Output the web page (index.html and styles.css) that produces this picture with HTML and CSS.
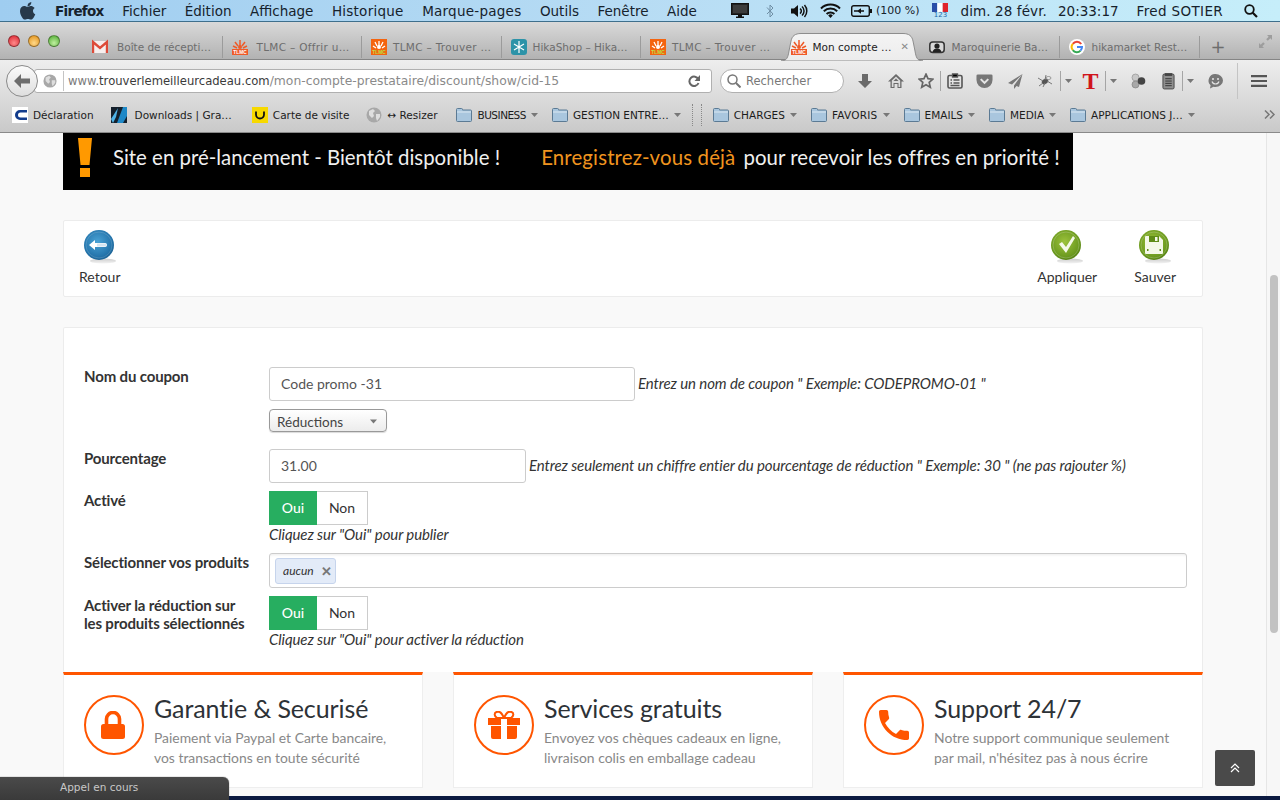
FILE: index.html
```html
<!DOCTYPE html>
<html lang="fr">
<head>
<meta charset="utf-8">
<title>Mon compte prestataire</title>
<link rel="stylesheet" href="styles.css">
</head>
<body>
<svg class="defs" aria-hidden="true">
  <defs>
    <radialGradient id="gBlue" cx="45%" cy="40%" r="65%"><stop offset="0" stop-color="#4aa3d6"/><stop offset=".75" stop-color="#2474ab"/><stop offset="1" stop-color="#1a5c8c"/></radialGradient>
    <radialGradient id="gGreen" cx="45%" cy="40%" r="65%"><stop offset="0" stop-color="#9cc23c"/><stop offset=".75" stop-color="#6c9a1f"/><stop offset="1" stop-color="#4f7a10"/></radialGradient>
    <linearGradient id="gShade" x1="0" y1="0" x2="0" y2="1"><stop offset="0" stop-color="#ccc"/><stop offset="1" stop-color="#f4f4f4"/></linearGradient>
    <symbol id="folder" viewBox="0 0 16 14"><path d="M.5 3V1.500q0-1 1-1h4q1 0 1 1V2h8q1 0 1 1v9.500q0 1-1 1h-13q-1 0-1-1z" fill="#a9c6de" stroke="#5b7a94"/><path d="M1 4h14" stroke="#dbe8f2"/></symbol>
    <symbol id="globe" viewBox="0 0 16 16"><circle cx="8" cy="8" r="7.500" fill="#a8a8a8"/><path d="M3 4l4-2 2 2-2 2 1 3-2 2-3-3zM10 7l4 0 0 3-3 4-1-3z" fill="#dedede"/></symbol>
    <symbol id="caret" viewBox="0 0 9 5"><path d="M0 0h9L4.500 5z" fill="#777"/></symbol>
    <symbol id="tlmcA" viewBox="0 0 16 16"><path d="M8 1v6M3 3l3 4M13 3l-3 4M1 7l4 2M15 7l-4 2" stroke="#ef5a28" stroke-width="1.500"/><circle cx="8" cy="8" r="2" fill="#ef5a28"/><rect y="10" width="16" height="6" fill="#ef5a28"/><text x="8" y="15" class="fav-text" fill="#fff">TLMC</text></symbol>
    <symbol id="tlmcB" viewBox="0 0 16 16"><rect width="16" height="16" fill="#f4640f"/><path d="M8 2v5M4 3l2 4M12 3l-2 4M2 7l3 2M14 7l-3 2" stroke="#fff" stroke-width="1.300"/><circle cx="8" cy="8" r="2" fill="#fff"/><text x="8" y="15" class="fav-text" fill="#b7e04a">TLMC</text></symbol>
  </defs>
</svg>

<header class="menubar">
  <svg class="apple" viewBox="0 0 16 18"><path d="M11.300 0c.1 1.300-.4 2.300-1 3-.7.8-1.700 1.300-2.700 1.200-.1-1.100.4-2.200 1-2.900C9.300.6 10.400.1 11.300 0zM14.700 6.100c-1 .7-1.700 1.700-1.700 3 0 1.500.9 2.700 2.300 3.200-.4 1.100-.9 2.100-1.600 3.100-.8 1.100-1.600 2.200-2.800 2.200s-1.600-.7-3-.7-1.800.7-3 .7-2-1.200-2.900-2.400C.8 13.500 0 11.200 0 9c0-3.300 2.200-5 4.300-5 1.200 0 2.300.8 3 .8.700 0 1.900-.9 3.300-.9 1.300 0 3 .5 4.100 2.200z" fill="#27394a"/></svg>
  <nav class="menu">
    <span class="menu-strong">Firefox</span><span>Fichier</span><span>Édition</span><span>Affichage</span><span class="menu-wide">Historique</span><span class="menu-wide">Marque-pages</span><span>Outils</span><span>Fenêtre</span><span>Aide</span>
  </nav>
  <div class="status">
    <svg class="st-monitor" viewBox="0 0 18 15"><rect x=".5" y=".5" width="17" height="11" fill="#222" stroke="#111"/><rect x="2" y="2" width="14" height="8" fill="#3c3c3c"/><path d="M7 12h4v1.500h2V15H5v-1.500h2z" fill="#111"/></svg>
    <svg class="st-bt" viewBox="0 0 8 14"><path d="M1 3.500l6 6.500-3 3V1l3 3-6 6" fill="none" stroke="#6f8ea4"/></svg>
    <svg class="st-vol" viewBox="0 0 17 14"><path d="M0 4.500h3L7 1v12L3 9.500H0z" fill="#111"/><path d="M9 4.500a3 3 0 0 1 0 5M11 2.500a6 6 0 0 1 0 9M13.500 1a9 9 0 0 1 0 12" fill="none" stroke="#111" stroke-width="1.500"/></svg>
    <svg class="st-wifi" viewBox="0 0 21 15"><path d="M1 5.500a13.500 13.500 0 0 1 19 0M3.800 8.300a9.500 9.500 0 0 1 13.400 0M6.600 11a5.500 5.500 0 0 1 7.800 0" fill="none" stroke="#111" stroke-width="2"/><path d="M10.500 15l-2.300-2.500a3.200 3.200 0 0 1 4.600 0z" fill="#111"/></svg>
    <svg class="st-batt" viewBox="0 0 21 12"><rect x=".7" y=".7" width="17.600" height="10.600" rx="2" fill="none" stroke="#111" stroke-width="1.400"/><rect x="19" y="4" width="2" height="4" fill="#111"/><path d="M3 5.200h4l3-2v2h3v1.600h-3v2l-3-2H3z" fill="#111"/></svg>
    <span class="st-pct">(100 %)</span>
    <span class="st-flag"><svg viewBox="0 0 16 9"><rect width="5.300" height="9" fill="#2a4fa8"/><rect x="5.300" width="5.400" height="9" fill="#fff"/><rect x="10.700" width="5.300" height="9" fill="#e0242c"/></svg><span class="st-flag-n">123</span></span>
    <span class="st-date">dim. 28 févr.</span>
    <span class="st-time">20:33:17</span>
    <span class="st-user">Fred SOTIER</span>
    <svg class="st-search" viewBox="0 0 14 14"><circle cx="5.500" cy="5.500" r="4.300" fill="none" stroke="#111" stroke-width="1.800"/><path d="M8.700 8.700l4.300 4.300" stroke="#111" stroke-width="2.200"/></svg>
  </div>
</header>

<section class="tabbar">
  <div class="lights"><i class="light red"></i><i class="light amber"></i><i class="light green"></i></div>
  <div class="tabs">
    <div class="tab tab-wide"><svg class="fav" viewBox="0 0 16 16"><rect y="2" width="16" height="12" fill="#f6efee"/><path d="M1 14V3l7 6 7-6v11" fill="none" stroke="#dd4b39" stroke-width="2.400"/></svg><span>Boîte de récepti…</span></div>
    <div class="tab tab-wide"><svg class="fav"><use href="#tlmcA"/></svg><span class="tab-stretch">TLMC – Offrir u…</span></div>
    <div class="tab"><svg class="fav"><use href="#tlmcB"/></svg><span class="tab-stretch">TLMC – Trouver …</span></div>
    <div class="tab"><svg class="fav" viewBox="0 0 16 16"><rect width="16" height="16" rx="3" fill="#2c93a8"/><path d="M8 2v12M3 5l10 6M13 5L3 11" stroke="#fff" stroke-width="1.200"/></svg><span>HikaShop – Hika…</span></div>
    <div class="tab tab-last"><svg class="fav"><use href="#tlmcB"/></svg><span class="tab-stretch">TLMC – Trouver …</span></div>
    <div class="tab tab-active">
      <svg class="tab-shape" viewBox="0 0 142 28" preserveAspectRatio="none"><defs><linearGradient id="gTab" x1="0" y1="0" x2="0" y2="1"><stop offset="0" stop-color="#f4f4f4"/><stop offset="1" stop-color="#ececec"/></linearGradient></defs><path d="M0 28C6 28 7 24 8 18L10 8C11 3 14 .5 20 .5H122C128 .5 131 3 132 8L134 18C135 24 136 28 142 28z" fill="url(#gTab)" stroke="#8d8d8d"/></svg>
      <svg class="fav"><use href="#tlmcA"/></svg><span>Mon compte …</span><b class="tab-x">✕</b>
    </div>
    <div class="tab tab-after"><svg class="fav" viewBox="0 0 16 16"><rect x=".8" y="3" width="14.400" height="10.500" rx="3" fill="#d8d8d8" stroke="#333" stroke-width="1.500"/><circle cx="8" cy="7" r="2.600" fill="#222"/><path d="M3.500 13c.5-2.500 2.500-3.500 4.500-3.500s4 1 4.500 3.500z" fill="#222"/></svg><span>Maroquinerie Ba…</span></div>
    <div class="tab tab-last tab-mid"><svg class="fav" viewBox="0 0 16 16"><circle cx="8" cy="8" r="8" fill="#fff"/><path d="M12.200 5a5 5 0 0 0-8.400-.1" fill="none" stroke="#ea4335" stroke-width="2"/><path d="M3.800 4.900a5 5 0 0 0 0 6.200" fill="none" stroke="#fbbc05" stroke-width="2"/><path d="M3.800 11.100a5 5 0 0 0 7.700.5" fill="none" stroke="#34a853" stroke-width="2"/><path d="M8 8h5a5 5 0 0 1-1.500 3.600" fill="none" stroke="#4285f4" stroke-width="2"/></svg><span>hikamarket Rest…</span></div>
    <i class="tab-sep"></i>
    <div class="tab-plus">+</div>
  </div>
  <svg class="fullscreen" viewBox="0 0 15 15"><path d="M9 1h5v5l-1.700-1.700-2.500 2.500-1.600-1.600 2.500-2.500zM6 14H1V9l1.700 1.700 2.500-2.500 1.600 1.600-2.500 2.500z" fill="#9d9d9d"/></svg>
</section>

<section class="navbar">
  <div class="back"><svg viewBox="0 0 16 14"><path d="M7 0L0 7l7 7V9.500h9v-5H7z" fill="#6d6d6d"/></svg></div>
  <div class="urlbar">
    <svg class="url-globe"><use href="#globe"/></svg>
    <span class="url-text"><span class="url-host"><span class="url-www">www.</span>trouverlemeilleurcadeau.com</span>/mon-compte-prestataire/discount/show/cid-15</span>
    <svg class="url-reload" viewBox="0 0 12 12"><path d="M10.300 4.200A4.700 4.700 0 1 0 10.500 8" fill="none" stroke="#666" stroke-width="2"/><path d="M12 0v6H6.500z" fill="#666"/></svg>
  </div>
  <div class="searchbar">
    <svg viewBox="0 0 14 14"><circle cx="5.500" cy="5.500" r="4.500" fill="none" stroke="#777" stroke-width="1.500"/><path d="M9 9l4.500 4.500" stroke="#777" stroke-width="2"/></svg>
    <span>Rechercher</span>
  </div>
  <div class="tools">
    <div class="tool"><svg class="ti" viewBox="0 0 16 16"><path d="M5 1h6v7h4l-7 7-7-7h4z" fill="#6a6a6a"/></svg></div>
    <div class="tool"><svg class="ti" viewBox="0 0 16 16"><path d="M8 1L0 8.500h2.500V15h4v-4h3v4h4V8.500H16z" fill="#6a6a6a"/><path d="M8 3.500L3.800 7.500V14h1.700v-4h5v4h1.700V7.500z" fill="#dcdcdc"/><path d="M8 5.500L5.500 8h5z" fill="#6a6a6a"/></svg></div>
    <div class="tool"><svg class="ti" viewBox="0 0 16 16"><path d="M8 1.200l2 4.500 4.800.5-3.600 3.200 1.100 4.800L8 11.700l-4.300 2.500 1.100-4.800L1.200 6.200 6 5.700z" fill="none" stroke="#666" stroke-width="1.700"/></svg></div>
    <i class="tool-sep"></i>
    <div class="tool"><svg class="ti" viewBox="0 0 16 16"><rect x="1" y="2.500" width="14" height="12.500" rx="1.500" fill="none" stroke="#555" stroke-width="1.600"/><path d="M5.500 1h5v3h-5zM3.500 7h1.500M3.500 10h1.500M6.500 7h6M6.500 10h6M3.500 12.500h9" stroke="#555" stroke-width="1.300"/></svg></div>
    <div class="tool"><svg class="ti ti-wide" viewBox="0 0 18 16"><path d="M2 1h14q1.500 0 1.500 1.500V7A8.500 8.500 0 0 1 .5 7V2.500Q.5 1 2 1z" fill="#777"/><path d="M5 6l4 4 4-4" fill="none" stroke="#e4e4e4" stroke-width="2.200"/></svg></div>
    <div class="tool"><svg class="ti" viewBox="0 0 16 16"><path d="M15.500 1L1 10l4 1.500L15.500 1 7 12.500V16l2.500-3 2.500 1z" fill="#777"/></svg></div>
    <div class="tool"><svg class="ti" viewBox="0 0 16 14"><ellipse cx="8" cy="7.500" rx="3.500" ry="2.500" transform="rotate(-35 8 7.500)" fill="#555"/><ellipse cx="11.500" cy="4" rx="2.500" ry="1.500" fill="#e8e8e8" stroke="#666" stroke-width=".6"/><path d="M1 4l5 3M2 12l4-3M9 1L8 6M15 10l-5-3M6 13l2-4" stroke="#777"/></svg></div>
    <i class="tool-sep"></i>
    <div class="tool"><svg class="caret"><use href="#caret"/></svg></div>
    <div class="tool tool-t">T</div>
    <i class="tool-sep"></i>
    <div class="tool"><svg class="caret"><use href="#caret"/></svg></div>
    <div class="tool"><svg class="ti" viewBox="0 0 16 16"><circle cx="5.500" cy="4.500" r="3.500" fill="#c8c8c8" stroke="#888" stroke-width=".6"/><circle cx="5.500" cy="11.500" r="3.500" fill="#a8a8a8" stroke="#777" stroke-width=".6"/><circle cx="11.500" cy="8" r="3.800" fill="#444"/></svg></div>
    <div class="tool"><svg class="ti ti-tall" viewBox="0 0 14 18"><rect x="1" y="1" width="12" height="16" rx="1.500" fill="#8f8f8f" stroke="#444"/><rect x="3" y="0" width="8" height="3" fill="#444"/><path d="M3.500 6h7M3.500 8.500h7M3.500 11h7M3.500 13.500h7" stroke="#333"/></svg></div>
    <i class="tool-sep"></i>
    <div class="tool"><svg class="caret"><use href="#caret"/></svg></div>
    <div class="tool"><svg class="ti ti-wide" viewBox="0 0 16 16"><path d="M8 1a7.500 6.500 0 0 1 0 13q-1 0-2-.3L2.500 15.500l.6-3.300A6.500 6.500 0 0 1 8 1z" fill="#777"/><circle cx="5.500" cy="6" r="1" fill="#e4e4e4"/><circle cx="10.500" cy="6" r="1" fill="#e4e4e4"/><path d="M4.500 8.500a3.700 3.700 0 0 0 7 0" fill="none" stroke="#e4e4e4" stroke-width="1.200"/></svg></div>
    <i class="tool-gap"></i>
    <i class="tool-sep tool-sep-tall"></i>
    <div class="tool"><svg class="ti ti-burger" viewBox="0 0 16 12"><path d="M0 1.200h16M0 6h16M0 10.800h16" stroke="#555" stroke-width="2.200"/></svg></div>
  </div>
</section>

<section class="bookmarks">
  <div class="bm bm-decl"><svg class="fav" viewBox="0 0 16 16"><rect width="16" height="16" fill="#fff"/><path d="M15 3H8a5 5 0 0 0 0 10h7v-2.500H8.500a2.500 2.500 0 0 1 0-5H15z" fill="#123c8c"/></svg><span>Déclaration</span></div>
  <div class="bm bm-dl"><svg class="fav" viewBox="0 0 16 16"><rect width="16" height="16" fill="#14202c"/><path d="M6 16L12 0h4v9l-4 7z" fill="#1e88c7"/><path d="M0 12L7 1l-2 9-3 6z" fill="#4fb3e8"/></svg><span>Downloads | Gra…</span></div>
  <div class="bm bm-card"><svg class="fav" viewBox="0 0 16 16"><rect width="16" height="16" fill="#f7d900"/><path d="M4 4.500v3a4 4 0 0 0 8 0v-3" fill="none" stroke="#111" stroke-width="1.800"/></svg><span>Carte de visite</span></div>
  <div class="bm bm-res"><svg class="fav"><use href="#globe"/></svg><span>↔ Resizer</span></div>
  <div class="bm"><svg class="fav"><use href="#folder"/></svg><span class="bm-narrow">BUSINESS</span><svg class="caret"><use href="#caret"/></svg></div>
  <div class="bm"><svg class="fav"><use href="#folder"/></svg><span>GESTION ENTRE…</span><svg class="caret"><use href="#caret"/></svg></div>
  <i class="bm-dots"></i>
  <div class="bm"><svg class="fav"><use href="#folder"/></svg><span>CHARGES</span><svg class="caret"><use href="#caret"/></svg></div>
  <div class="bm"><svg class="fav"><use href="#folder"/></svg><span class="bm-loose">FAVORIS</span><svg class="caret"><use href="#caret"/></svg></div>
  <div class="bm"><svg class="fav"><use href="#folder"/></svg><span>EMAILS</span><svg class="caret"><use href="#caret"/></svg></div>
  <div class="bm"><svg class="fav"><use href="#folder"/></svg><span>MEDIA</span><svg class="caret"><use href="#caret"/></svg></div>
  <div class="bm"><svg class="fav"><use href="#folder"/></svg><span>APPLICATIONS J…</span><svg class="caret"><use href="#caret"/></svg></div>
  <svg class="bm-more" viewBox="0 0 12 9"><path d="M1 .5L5 4.500 1 8.500M6 .5l4 4-4 4" fill="none" stroke="#777" stroke-width="1.500"/></svg>
</section>

<div class="viewport">
  <main class="page">
    <div class="banner">
      <svg class="banner-mark" viewBox="0 0 14 39"><path d="M0 0h14l-2.500 27h-9z" fill="#f90"/><rect x="2" y="30" width="10" height="9" fill="#f90"/></svg>
      <span class="banner-a">Site en pré-lancement - Bientôt disponible !</span>
      <span class="banner-b">Enregistrez-vous déjà</span>
      <span class="banner-c">pour recevoir les offres en priorité !</span>
    </div>

    <div class="card actions">
      <div class="action">
        <svg class="action-icon" viewBox="0 0 34 38"><ellipse cx="20" cy="32" rx="13" ry="2.500" fill="url(#gShade)"/><circle cx="16" cy="16" r="15" fill="url(#gBlue)"/><circle cx="16" cy="16" r="13" fill="none" stroke="#fff" stroke-opacity=".15"/><path d="M6 16l6-5v3h10q2 0 2 2t-2 2H12v3z" fill="#fff"/><path d="M14 14.500h8q1.500 0 1.500 1.500T22 17.500h-8z" fill="#d6e6f2"/></svg>
        <span>Retour</span>
      </div>
      <div class="action action-right">
        <svg class="action-icon" viewBox="0 0 34 38"><ellipse cx="20" cy="32" rx="13" ry="2.500" fill="url(#gShade)"/><circle cx="16" cy="16" r="15" fill="url(#gGreen)"/><circle cx="16" cy="16" r="13" fill="none" stroke="#fff" stroke-opacity=".2"/><path d="M9 15l3-2 4 5 7-11 2 2-9 15z" fill="#f4f8e8"/></svg>
        <span>Appliquer</span>
      </div>
      <div class="action">
        <svg class="action-icon" viewBox="0 0 34 38"><ellipse cx="20" cy="32" rx="13" ry="2.500" fill="url(#gShade)"/><circle cx="16" cy="16" r="15" fill="url(#gGreen)"/><circle cx="16" cy="16" r="13" fill="none" stroke="#fff" stroke-opacity=".2"/><path d="M8 7h13l4 4v13q0 1-1 1H8q-1 0-1-1V8q0-1 1-1z" fill="#f4f8e8"/><path d="M11 7h10v6H11z" fill="#5f8c18"/><rect x="17" y="8" width="2.500" height="4" fill="#f4f8e8"/><path d="M9 20h1.500v2H9zM21.500 20H23v2h-1.500z" fill="#5f8c18"/></svg>
        <span>Sauver</span>
      </div>
    </div>

    <form class="card form">
      <div class="lbl">Nom du coupon</div>
      <div class="field">
        <div class="with-hint"><input class="input input-long" value="Code promo -31"><em class="hint hint-side">Entrez un nom de coupon " Exemple: CODEPROMO-01 "</em></div>
        <div class="select"><span>Réductions</span><svg class="select-caret"><use href="#caret"/></svg></div>
      </div>
      <div class="lbl">Pourcentage</div>
      <div class="field">
        <div class="with-hint"><input class="input input-short" value="31.00"><em class="hint hint-side">Entrez seulement un chiffre entier du pourcentage de réduction " Exemple: 30 " (ne pas rajouter %)</em></div>
      </div>
      <div class="lbl">Activé</div>
      <div class="field">
        <div class="toggle"><span class="on">Oui</span><span class="off">Non</span></div>
        <em class="hint hint-below">Cliquez sur "Oui" pour publier</em>
      </div>
      <div class="lbl">Sélectionner vos produits</div>
      <div class="field">
        <div class="tagbox"><span class="chip"><em>aucun</em><b>✕</b></span></div>
      </div>
      <div class="lbl lbl-wrap">Activer la réduction sur les produits sélectionnés</div>
      <div class="field">
        <div class="toggle"><span class="on">Oui</span><span class="off">Non</span></div>
        <em class="hint hint-below">Cliquez sur "Oui" pour activer la réduction</em>
      </div>
    </form>

    <div class="features">
      <article class="feature">
        <div class="feature-ico"><svg viewBox="0 0 24 28" class="ico-lock"><path d="M5.500 13V8a6.500 6.500 0 0 1 13 0v5" fill="none" stroke="#f50" stroke-width="3.600"/><rect y="13" width="24" height="15" rx="2.500" fill="#f50"/></svg></div>
        <div><h3>Garantie &amp; Securisé</h3><p>Paiement via Paypal et Carte bancaire,<br>vos transactions en toute sécurité</p></div>
      </article>
      <article class="feature">
        <div class="feature-ico"><svg viewBox="0 0 32 28" class="ico-gift"><path d="M16 7c-2-5-5-7-7.500-6S6 5 9 7zM16 7c2-5 5-7 7.500-6S26 5 23 7z" fill="none" stroke="#f50" stroke-width="2"/><path d="M0 7h13v7H0zM19 7h13v7H19zM3 15h10v13H5q-2 0-2-2zM19 15h10v11q0 2-2 2h-8z" fill="#f50"/></svg></div>
        <div><h3>Services gratuits</h3><p>Envoyez vos chèques cadeaux en ligne,<br>livraison colis en emballage cadeau</p></div>
      </article>
      <article class="feature">
        <div class="feature-ico"><svg viewBox="3 3 18 18" class="ico-phone"><path d="M6.620 10.790c1.440 2.830 3.760 5.140 6.590 6.590l2.200-2.200c.27-.27.67-.36 1.020-.24 1.120.37 2.330.57 3.570.57.55 0 1 .45 1 1V20c0 .55-.45 1-1 1-9.390 0-17-7.610-17-17 0-.55.45-1 1-1h3.500c.55 0 1 .45 1 1 0 1.250.2 2.450.57 3.570.11.35.03.74-.25 1.020l-2.200 2.200z" fill="#f50"/></svg></div>
        <div><h3>Support 24/7</h3><p>Notre support communique seulement<br>par mail, n'hésitez pas à nous écrire</p></div>
      </article>
    </div>
  </main>
  <aside class="scrollbar"><div class="thumb"></div></aside>
</div>
<div class="desktop"></div>

<button class="totop" type="button"><svg viewBox="0 0 10 10"><path d="M1 5l4-4 4 4M1 9l4-4 4 4" fill="none" stroke="#fff" stroke-width="1.200"/></svg></button>
<div class="callbar">Appel en cours</div>
</body>
</html>
```
FILE: styles.css
```css
* { box-sizing: border-box; }
html, body { margin: 0; padding: 0; }
body {
  position: relative;
  width: 1280px;
  height: 800px;
  overflow: hidden;
  background: #0b1a40;
  font-family: "Lato", sans-serif;
  color: #333;
}
.defs { position: absolute; width: 0; height: 0; }
.fav-text { font: bold 4.800px "Liberation Sans", sans-serif; text-anchor: middle; }

/* Mac menu bar */
.menubar {
  display: flex;
  align-items: center;
  height: 22px;
  padding-left: 20px;
  background: linear-gradient(90deg, #9fcdf0 0%, #b7dcf4 50%, #c6eefa 100%);
  border-bottom: 1px solid #3f6f8c;
  font: 13.500px "DejaVu Sans", sans-serif;
  color: #16222c;
  white-space: nowrap;
}
.apple { width: 16px; height: 18px; }
.menu { display: flex; gap: 18.500px; margin-left: 19px; }
.menu-strong { font-weight: bold; letter-spacing: -.7px; }
.menu-wide { letter-spacing: .25px; }
.status { display: flex; align-items: center; margin-left: auto; }
.status svg { display: block; }
.st-monitor { width: 18px; height: 15px; }
.st-bt { width: 8px; height: 14px; margin-left: 17px; }
.st-vol { width: 17px; height: 14px; margin-left: 17px; }
.st-wifi { width: 21px; height: 15px; margin-left: 12px; }
.st-batt { width: 21px; height: 12px; margin-left: 10px; }
.st-pct { margin-left: 4px; font-size: 11px; }
.st-flag { width: 16px; margin-left: 13px; line-height: 1; }
.st-flag svg { width: 16px; height: 9px; }
.st-flag-n { display: block; font-size: 7px; color: #1d66a8; text-align: center; }
.st-date { margin-left: 12px; letter-spacing: .1px; }
.st-time { margin-left: 11px; }
.st-user { margin-left: 18px; letter-spacing: .35px; }
.st-search { width: 14px; height: 14px; margin-left: 21px; margin-right: 22px; }

/* Tabs row */
.tabbar {
  display: flex;
  height: 38px;
  background: linear-gradient(#d9d9d9, #b2b2b2);
  border-bottom: 1px solid #858585;
  font: 10.500px "DejaVu Sans", sans-serif;
  color: #6d6d6d;
  white-space: nowrap;
}
.lights { display: flex; gap: 8px; width: 83px; padding: 13px 0 0 8px; }
.light { width: 12px; height: 12px; border-radius: 50%; border: 1px solid rgba(0, 0, 0, .35); }
.red { background: radial-gradient(circle at 50% 70%, #ff8a8a, #d8202c); }
.amber { background: radial-gradient(circle at 50% 70%, #ffd98a, #e08c10); }
.green { background: radial-gradient(circle at 50% 70%, #c0f0a0, #4aa82c); }
.tabs { display: flex; align-items: flex-end; height: 38px; }
.tab {
  position: relative;
  display: flex;
  align-items: center;
  gap: 6px;
  flex: 0 0 139.500px;
  height: 27px;
  padding: 0 0 0 9px;
}
.tab-wide { gap: 9px; }
.tab-mid { gap: 7px; }
.tab-after { gap: 7px; flex-basis: 137px; padding-left: 6px; }
.tab-stretch { letter-spacing: .3px; }
.tab::after {
  content: "";
  position: absolute;
  right: 0;
  top: 3px;
  bottom: 2px;
  width: 1px;
  background: #9b9b9b;
}
.tab-last::after, .tab-active::after { display: none; }
.fav { flex: none; width: 16px; height: 16px; }
.tab-active { flex-basis: 142px; color: #222; padding-left: 10px; gap: 6px; }
.tab-shape { position: absolute; left: 0; top: 0; width: 142px; height: 28px; }
.tab-active > .fav, .tab-active > span, .tab-active > b { position: relative; }
.tab-x { margin-left: 3px; color: #8a8a8a; font-size: 10px; }
.tab-sep { width: 1px; height: 22px; margin-bottom: 2px; background: #9b9b9b; }
.tab-plus { width: 36px; height: 27px; text-align: center; font-size: 18px; line-height: 28px; color: #6d6d6d; }
.fullscreen { width: 15px; height: 15px; margin: 12px 7px 0 auto; }

/* Navigation row */
.navbar {
  display: flex;
  align-items: center;
  height: 36px;
  padding: 6px 0 0 6px;
  background: linear-gradient(#eeeeee, #dcdcdc);
  font: 12px "DejaVu Sans", sans-serif;
  white-space: nowrap;
}
.back {
  position: relative;
  display: flex;
  align-items: center;
  justify-content: center;
  flex: none;
  width: 32px;
  height: 32px;
  margin-right: -4px;
  border: 1px solid #8a8a8a;
  border-radius: 50%;
  background: linear-gradient(#fbfbfb, #dedede);
}
.back svg { width: 16px; height: 14px; }
.urlbar {
  display: flex;
  align-items: center;
  flex: none;
  width: 678px;
  height: 24px;
  padding-left: 8px;
  background: #fff;
  border: 1px solid #b0b0b0;
  border-radius: 3px;
  color: #8a8a8a;
}
.url-globe { flex: none; width: 14px; height: 14px; margin-left: 0; }
.url-text { margin-left: 6px; padding-left: 4px; border-left: 1px solid #c4c4c4; line-height: 20px; font-size: 12.350px; }
.url-host { color: #3a3a3a; font-size: 11.600px; }
.url-www { color: #7a7a7a; }
.url-reload { width: 12px; height: 12px; margin-left: auto; margin-right: 11px; }
.searchbar {
  display: flex;
  align-items: center;
  gap: 5px;
  flex: none;
  width: 124px;
  height: 24px;
  margin-left: 8px;
  padding-left: 6px;
  background: #fff;
  border: 1px solid #b0b0b0;
  border-radius: 12px;
  color: #777;
  font-size: 11.500px;
}
.searchbar svg { width: 14px; height: 14px; }
.tools {
  display: grid;
  grid-template-columns: 30px 31px 29px 1px 27px 32px 30px 30px 1px 15px 29px 1px 14px 35px 27px 1px 14px 36px 4px 1px 42px;
  grid-template-rows: 30px;
  align-items: center;
  justify-items: center;
  margin-left: 6px;
  height: 30px;
}
.tool { display: flex; align-items: center; justify-content: center; width: 100%; }
.ti { width: 16px; height: 16px; }
.ti-wide { width: 17px; height: 16px; }
.ti-tall { width: 13px; height: 17px; }
.ti-burger { width: 16px; height: 12px; }
.caret { flex: none; width: 7px; height: 4px; }
.tool-sep { width: 1px; height: 20px; background: #a5a5a5; }
.tool-sep-tall { height: 36px; background: #c4c4c4; }
.tool-t { font: bold 24px/1 "Liberation Serif", serif; color: #d0141c; }

/* Bookmarks row */
.bookmarks {
  display: flex;
  align-items: center;
  gap: 14px;
  height: 37px;
  padding: 1px 0 0 12px;
  background: linear-gradient(#dcdcdc, #c9c9c9);
  border-bottom: 1px solid #8a8a8a;
  font: 10.500px "DejaVu Sans", sans-serif;
  color: #1c1c1c;
  white-space: nowrap;
}
.bm { display: flex; align-items: center; gap: 5px; }
.bm-decl { margin-right: 3px; }
.bm-dl { gap: 8px; margin-right: 6px; }
.bm-card { margin-right: 3px; }
.bm-res { margin-right: 5px; }
.bm-narrow { letter-spacing: -.5px; }
.bm-loose { letter-spacing: .25px; }
.bm-dots {
  width: 10px;
  height: 22px;
  margin: 0 -3px 0 -3px;
  border-left: 1px dotted #888;
  border-right: 1px dotted #888;
}
.bm-more { width: 12px; height: 9px; margin-left: auto; margin-right: 4px; }

/* Page */
.viewport { display: flex; height: 663px; overflow: hidden; }
.page { flex: 0 0 1266px; padding-left: 63px; background: #f9f9f9; }
.scrollbar { flex: 1; padding: 142px 2px 0 3px; background: #f7f7f7; border-left: 1px solid #e6e6e6; }
.thumb { height: 358px; border-radius: 5px; background: #c2c2c2; }
.desktop { height: 4px; background: #0b1a40; }

.banner {
  display: flex;
  align-items: center;
  width: 1010px;
  height: 57px;
  padding: 0 0 9px 15px;
  background: #000;
  color: #f0f0f0;
  font-size: 20.400px;
  white-space: nowrap;
}
.banner-mark { flex: none; width: 14px; height: 39px; margin-top: 1px; }
.banner-a { margin-left: 21px; }
.banner-b { margin-left: 41px; color: #f0941f; letter-spacing: .15px; }
.banner-c { margin-left: 8px; letter-spacing: .06px; }

.card { width: 1140px; background: #fff; border: 1px solid #ececec; border-radius: 2px; }
.actions {
  display: flex;
  height: 77px;
  margin-top: 30px;
  padding: 8px 26px 0 15px;
}
.action { display: flex; flex-direction: column; align-items: center; font-size: 14px; color: #333; }
.action-right { margin-left: auto; margin-right: 37px; }
.action-icon { width: 34px; height: 38px; }
.action span { line-height: 20px; }

.form {
  display: grid;
  grid-template-columns: 185px 918px;
  row-gap: 8px;
  height: 345px;
  margin-top: 30px;
  align-content: start;
  padding: 39px 0 0 20px;
  border-bottom: 0;
  font-size: 14px;
}
.lbl { font-size: 15px; letter-spacing: -.15px; font-weight: 700; line-height: 18px; color: #333; white-space: nowrap; }
.lbl-wrap { padding-right: 20px; white-space: normal; }
.field { display: flex; flex-direction: column; align-items: flex-start; }
.with-hint { display: flex; align-items: center; gap: 3px; white-space: nowrap; }
.input {
  height: 34px;
  padding: 0 11px 2px 11px;
  background: #fff;
  border: 1px solid #ccc;
  border-radius: 3px;
  font: 14px "Lato", sans-serif;
  color: #555;
}
.input-long { width: 366px; }
.input-short { width: 257px; }
.hint { font-size: 15px; font-style: italic; color: #333; line-height: 20px; letter-spacing: -.1px; }
.hint-side { padding-bottom: 2px; }
.hint-below { margin: -1px 0 1px; }
.select {
  display: flex;
  align-items: center;
  justify-content: space-between;
  width: 118px;
  height: 23px;
  margin: 8px 0 9px;
  padding: 2px 9px 0 7px;
  background: linear-gradient(#fff, #ececec);
  border: 1px solid #999;
  border-radius: 4px;
  box-shadow: 0 1px 1px rgba(0, 0, 0, .15);
  color: #444;
  font-size: 13.500px;
}
.select-caret { width: 7px; height: 5px; }
.toggle { display: flex; height: 34px; line-height: 32px; text-align: center; }
.on { width: 48px; background: #27ae60; border: 1px solid #27ae60; color: #fff; font-weight: 500; }
.off { width: 51px; background: #fff; border: 1px solid #ccc; border-left: 0; color: #333; }
.tagbox {
  display: flex;
  align-items: center;
  width: 918px;
  height: 35px;
  padding-left: 5px;
  background: #fff;
  border: 1px solid #ccc;
  border-radius: 3px;
  box-shadow: inset 0 3px 3px -2px rgba(0, 0, 0, .08);
}
.chip {
  display: flex;
  align-items: center;
  justify-content: space-between;
  width: 61px;
  height: 26px;
  padding: 0 3px 0 7px;
  background: #e3ebf8;
  border: 1px solid #c6d4ec;
  border-radius: 3px;
  font-size: 12px;
}
.chip b { color: #777; font-size: 13px; }

.features { display: flex; gap: 30px; width: 1140px; }
.feature {
  display: flex;
  gap: 10px;
  width: 360px;
  height: 116px;
  padding: 20px 0 0 20px;
  background: #fff;
  border: 1px solid #eee;
  border-top: 3px solid #f50;
}
.feature-ico {
  display: flex;
  align-items: center;
  justify-content: center;
  flex: none;
  width: 60px;
  height: 60px;
  border: 2px solid #f50;
  border-radius: 50%;
}
.ico-lock { width: 24px; height: 28px; margin-right: 3px; }
.ico-gift { width: 32px; height: 28px; }
.ico-phone { width: 30px; height: 30px; }
.feature h3 { margin: -2px 0 0; font-size: 25px; letter-spacing: -.1px; font-weight: 400; line-height: 30px; color: #2d3237; }
.feature p { margin: 5px 0 0; font-size: 13.900px; line-height: 20px; color: #888; }

.totop {
  position: absolute;
  left: 1215px;
  top: 750px;
  width: 40px;
  height: 36px;
  padding: 0;
  background: #4a4a4a;
  border: 0;
  border-radius: 2px;
}
.totop svg { width: 10px; height: 10px; }
.callbar {
  position: absolute;
  left: 0;
  top: 777px;
  width: 229px;
  height: 23px;
  padding-left: 60px;
  background: linear-gradient(#4a4a4a, #3a3a3a);
  border-radius: 0 6px 0 0;
  box-shadow: 0 0 1px #222;
  font: 10.500px/21px "DejaVu Sans", sans-serif;
  color: #c8c8c8;
}
```
